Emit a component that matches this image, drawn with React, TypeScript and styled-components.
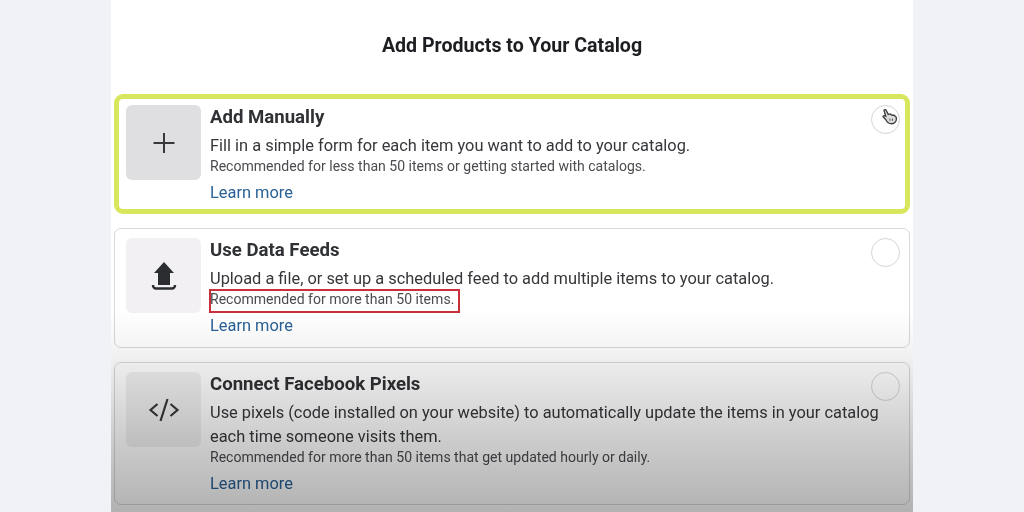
import React from "react";
import styled, { createGlobalStyle } from "styled-components";

const Global = createGlobalStyle`
  html, body { margin: 0; padding: 0; width: 1024px; height: 512px; overflow: hidden; background: #f0f2f7; }
  * { box-sizing: border-box; }
`;

const Page = styled.div`
  width: 1024px;
  height: 512px;
  display: flex;
  justify-content: center;
  overflow: hidden;
  font-family: Roboto, "Liberation Sans", sans-serif;
  background: #f0f2f7;
`;

const Panel = styled.main`
  position: relative;
  width: 802px;
  height: 512px;
  padding: 0 3px;
  background: #fff;
  overflow: hidden;
  filter: blur(0.35px);
`;

const Shade = styled.div`
  position: absolute;
  inset: 0;
  pointer-events: none;
  background: linear-gradient(to bottom, rgba(0,0,0,0) 0, rgba(0,0,0,0) 310px, rgba(0,0,0,0.04) 345px, rgba(0,0,0,0.1) 380px, rgba(0,0,0,0.2) 440px, rgba(0,0,0,0.3) 512px);
`;

const Heading = styled.h1`
  margin: 0;
  height: 94px;
  padding-top: 35px;
  text-align: center;
  font-size: 19.6px;
  line-height: 22px;
  font-weight: 700;
  color: #1c1e21;
`;

const List = styled.div`
  display: flex;
  flex-direction: column;
  gap: 14px;
`;

const Card = styled.section<{ $selected?: boolean; $height: number; $top: number }>`
  position: relative;
  height: ${(p) => p.$height}px;
  display: flex;
  gap: 9px;
  padding: ${(p) => p.$top}px 0 0 ${(p) => (p.$selected ? 7 : 11)}px;
  border-radius: ${(p) => (p.$selected ? 9 : 7)}px;
  background: #fff;
  border: ${(p) => (p.$selected ? "5px solid #d7e65c" : "1px solid #d6d8dc")};
`;

const IconTile = styled.div<{ $tone: string }>`
  flex: none;
  width: 75px;
  height: 75px;
  border-radius: 6px;
  background: ${(p) => p.$tone};
  display: flex;
  align-items: center;
  justify-content: center;
`;

const Body = styled.div`
  display: flex;
  flex-direction: column;
  min-width: 0;
`;

const Title = styled.h2`
  margin: 0;
  font-size: 18.6px;
  line-height: 24px;
  font-weight: 700;
  color: #2f3134;
`;

const Description = styled.p`
  margin: 5px 0 0;
  width: 690px;
  font-size: 16.4px;
  line-height: 24px;
  color: #35373a;
`;

const Note = styled.span`
  position: relative;
  font-size: 14.05px;
  line-height: 20px;
  margin-top: -2px;
  color: #4a4c50;
`;

const Highlight = styled.span`
  position: absolute;
  left: -1px;
  top: 0;
  width: 251px;
  height: 24px;
  border: 2px solid #c8303a;
  pointer-events: none;
`;

const Learn = styled.a`
  margin-top: 5px;
  font-size: 16.4px;
  line-height: 24px;
  color: #2a6196;
  text-decoration: none;
`;

const Radio = styled.span<{ $selected?: boolean }>`
  position: absolute;
  right: ${(p) => (p.$selected ? "5px" : "9px")};
  top: ${(p) => (p.$selected ? "6px" : "9px")};
  width: 29px;
  height: 29px;
  border-radius: 50%;
  border: 1px solid #d4d5d7;
  background: transparent;
`;

const Cursor = styled.svg`
  position: absolute;
  left: 9px;
  top: 2px;
  width: 17px;
  height: 17px;
`;

const Plus = () => (
  <svg width="24" height="24" viewBox="0 0 24 24" fill="none" stroke="#36383b" strokeWidth="2">
    <path d="M12 2v20M1.5 12h21" />
  </svg>
);

const Upload = () => (
  <svg width="26" height="30" viewBox="0 0 26 30" fill="#2b2d30">
    <path d="M13 1 L23 12 H19 V24 H7 V12 H3 Z" />
    <path d="M2 24 v0.5 a3 3 0 0 0 3 3 h16 a3 3 0 0 0 3 -3 V24" fill="none" stroke="#2b2d30" strokeWidth="2.4" />
  </svg>
);

const Code = () => (
  <svg width="32" height="26" viewBox="0 0 32 26" fill="none" stroke="#36383b" strokeWidth="2.2">
    <path d="M9.5 7 L2.5 13 L9.5 19" />
    <path d="M19.5 2 L12.5 24" />
    <path d="M22.5 7 L29.5 13 L22.5 19" />
  </svg>
);

export default function App() {
  return (
    <Page>
      <Global />
      <Panel>
        <Heading>Add Products to Your Catalog</Heading>
        <List>
          <Card $selected $height={120} $top={6}>
            <IconTile $tone="#dfdee0"><Plus /></IconTile>
            <Body>
              <Title>Add Manually</Title>
              <Description>Fill in a simple form for each item you want to add to your catalog.</Description>
              <Note>Recommended for less than 50 items or getting started with catalogs.</Note>
              <Learn>Learn more</Learn>
            </Body>
            <Radio $selected>
              <Cursor viewBox="0 0 20 20" fill="#dcdcdc" stroke="#3f3f3f" strokeWidth="1.6">
                <path d="M3.5 2.5 C4.5 1.5 6 2 6.5 3.5 L8.5 7.5 L11 7 L13 8.5 L15.5 8.5 L18 11 C19 15 16 18.5 12.5 18.5 C9 18.5 7 16.5 5.5 13.5 L2.5 10.5 C2 9.5 3.5 8.5 5.5 9.5 Z" />
                <path d="M10.5 12.5v2.5M13.5 12.5v2.5" strokeWidth="1" />
              </Cursor>
            </Radio>
          </Card>
          <Card $height={120} $top={9}>
            <IconTile $tone="#f2f0f2"><Upload /></IconTile>
            <Body>
              <Title>Use Data Feeds</Title>
              <Description>Upload a file, or set up a scheduled feed to add multiple items to your catalog.</Description>
              <Note>
                Recommended for more than 50 items.
                <Highlight />
              </Note>
              <Learn>Learn more</Learn>
            </Body>
            <Radio />
          </Card>
          <Card $height={143} $top={9}>
            <IconTile $tone="#f0f0f0"><Code /></IconTile>
            <Body>
              <Title>Connect Facebook Pixels</Title>
              <Description>Use pixels (code installed on your website) to automatically update the items in your catalog each time someone visits them.</Description>
              <Note>Recommended for more than 50 items that get updated hourly or daily.</Note>
              <Learn>Learn more</Learn>
            </Body>
            <Radio />
          </Card>
        </List>
        <Shade />
      </Panel>
    </Page>
  );
}
